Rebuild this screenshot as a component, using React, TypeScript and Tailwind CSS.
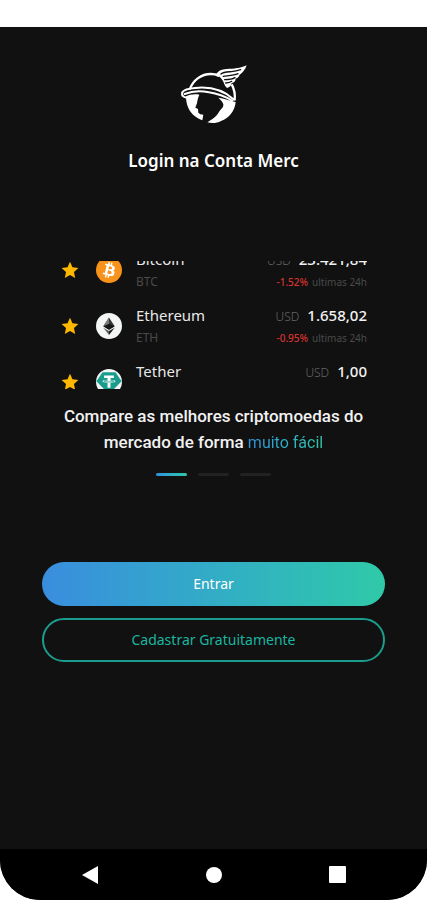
const COINS = [
  { code: 'BTC', name: 'Bitcoin', price: '23.421,84', change: '-1.52%' },
  { code: 'ETH', name: 'Ethereum', price: '1.658,02', change: '-0.95%' },
  { code: 'USDT', name: 'Tether', price: '1,00', change: '-0.01%' },
];

function MercLogo() {
  return (
    <svg viewBox="30 24 204 186" className="w-[68px] h-[62px]" fill="none" aria-label="Merc">
      {/* Helmet dome, brim and circle outline */}
      <path d="M60 101 C70 75 94 57 122 57 C132 57 139 58 145 62" stroke="#fff" strokeWidth="7" strokeLinecap="round" />
      <path d="M185 88 C193 102 196 116 194 136" stroke="#fff" strokeWidth="7" />
      <path d="M192 134 C164 108 124 96 86 98 C64 99 39 104 36 114 C35 124 44 128 50 127" stroke="#fff" strokeWidth="6" strokeLinecap="round" />
      <path d="M44 117 C66 108 94 107 117 112 C145 116 168 126 186 137" stroke="#fff" strokeWidth="6" strokeLinecap="round" />
      {/* Wing */}
      <path d="M137 60 C143 48 154 43 170 42 C192 41 211 40 230 31 C226 44 218 53 209 59 C207 66 201 70 197 71 C197 79 190 84 185 84 C184 92 179 97 171 99 C162 91 162 82 157 75 C152 67 146 63 137 60Z" fill="#fff" />
      <path d="M153 57 C160 51 172 51 184 50 C194 49 203 47 212 44 M160 64 C174 62 191 62 204 56 M164 74 C175 74 187 73 195 68 M167 84 C174 84 180 83 185 79" stroke="#111" strokeWidth="4" strokeLinecap="round" />
      {/* Face and hair silhouette */}
      <path d="M48 124 C57 119 73 116 88 119 C84 128 82 137 81 145 L76 158 L84 162 L85 173 L91 178 L100 179 L97 196 C77 189 60 174 53 154 C49 143 48 133 48 124Z" fill="#fff" />
      <path d="M145 128 C162 130 181 137 197 141 C195 166 178 190 153 198 C141 205 125 206 112 202 C126 194 141 182 145 174 C151 163 161 159 160 148 C158 139 151 134 145 128Z" fill="#fff" />
    </svg>
  );
}

function CoinIcon({ code }: { code: string }) {
  if (code === 'BTC') {
    return (
      <svg viewBox="0 0 32 32" className="size-[26px] shrink-0" aria-hidden="true">
        <circle cx="16" cy="16" r="16" fill="#f7931a" />
        <path fill="#fff" d="M23.19 14.02c.31-2.1-1.29-3.23-3.48-3.98l.71-2.85-1.73-.43-.69 2.77-1.39-.33.7-2.79-1.73-.43-.71 2.84-1.1-.26-2.4-.6-.46 1.85s1.29.3 1.26.32c.7.17.83.64.8 1l-1.94 7.8c-.09.21-.3.53-.79.41l-1.26-.31-.86 1.99 3.5.88-.72 2.88 1.73.43.71-2.85 1.38.36-.71 2.84 1.73.43.72-2.88c2.95.56 5.17.34 6.1-2.33.76-2.15-.03-3.39-1.58-4.2 1.13-.26 1.98-1 2.21-2.56zm-3.96 5.55c-.53 2.15-4.15.99-5.32.7l.95-3.81c1.17.3 4.93.88 4.37 3.11zm.54-5.58c-.49 1.96-3.5.96-4.48.72l.86-3.46c.98.25 4.13.7 3.62 2.74z" />
      </svg>
    );
  }
  if (code === 'ETH') {
    return (
      <svg viewBox="0 0 32 32" className="size-[26px] shrink-0" aria-hidden="true">
        <circle cx="16" cy="16" r="16" fill="#f4f5f5" />
        <path fill="#353638" d="M16 5.5 9 16.4 16 20.5 23 16.4Z" />
        <path fill="#161617" d="M16 13.2 23 16.4 16 20.5 9 16.4Z" />
        <path fill="#77787a" d="M16 5.5 9 16.4 16 13.2Z" />
        <path fill="#626365" d="M9 18 16 22.1V27Z" />
        <path fill="#202123" d="M23 18 16 22.1V27Z" />
      </svg>
    );
  }
  return (
    <svg viewBox="0 0 32 32" className="size-[26px] shrink-0" aria-hidden="true">
      <circle cx="16" cy="16" r="16" fill="#f4f5f5" />
      <path fill="#1a9c8d" d="M8 4h16l7.500 11L16 31 .5 15Z" />
      <path fill="#fff" d="M10 8h12v3.200h-4.200v2c3.700.2 6.200.9 6.200 1.800s-2.500 1.600-6.200 1.800V23h-3.600v-6.200C10.500 16.600 8 15.900 8 15s2.500-1.600 6.200-1.800v-2H10Z" />
      <path d="M14.200 14.100c-2.500.1-4.500.5-4.500.9s2 .9 6.300.9 6.300-.5 6.300-.9-2-.8-4.500-.9" fill="none" stroke="#1a9c8d" />
    </svg>
  );
}

function Star() {
  return (
    <svg viewBox="0 0 24 24" className="size-[18px] shrink-0" fill="#ffb800" aria-hidden="true">
      <path d="M12 1 15.300 8.300 23.200 9.200 17.300 14.600 18.900 22.500 12 18.500 5.100 22.500 6.700 14.600.8 9.200 8.700 8.300Z" />
    </svg>
  );
}

export default function App() {
  return (
    <div className="min-h-screen flex flex-col bg-white font-['Noto_Sans',sans-serif]">
      {/* Status bar */}
      <div className="h-[27px] shrink-0" />

      <div className="flex-1 flex flex-col bg-[#111111] rounded-b-[40px] overflow-hidden">
        <main className="flex-1 flex flex-col px-[42px] pt-9">
          <header className="flex flex-col items-center gap-[22px]">
            <MercLogo />
            <h1 className="text-[17px] leading-7 font-semibold text-white">Login na Conta Merc</h1>
          </header>

          {/* Coin carousel slide */}
          <section className="mt-[86px]">
            <div className="h-32 mx-[18px] overflow-hidden">
              <ul className="-mt-[19px]">
                {COINS.map((coin) => (
                  <li key={coin.code} className="h-14 flex items-center pl-px">
                    <Star />
                    <div className="ml-[17px] flex">
                      <CoinIcon code={coin.code} />
                    </div>
                    <div className="ml-[14px] flex-1">
                      <p className="text-[15px] leading-6 text-[#e8e8e8]">{coin.name}</p>
                      <p className="text-xs leading-[22px] text-[#4a4a4a]">{coin.code}</p>
                    </div>
                    <div className="text-right whitespace-nowrap">
                      <p className="text-[15px] leading-6 font-medium text-[#f2f2f2]">
                        <span className="mr-2 text-xs font-light text-[#666666]">USD</span>
                        {coin.price}
                      </p>
                      <p className="text-[10px] leading-[22px] text-[#4a4a4a]">
                        <span className="mr-1 font-medium text-[#d8322f]">{coin.change}</span>
                        ultimas 24h
                      </p>
                    </div>
                  </li>
                ))}
              </ul>
            </div>
            <p className="mt-[14px] text-center font-[Roboto,sans-serif] text-[17px] leading-[26px] font-medium text-[#f2f2f2]">
              Compare as melhores criptomoedas do <br />
              mercado de forma{' '}
              <span className="text-base leading-none font-normal bg-linear-to-r from-[#3490dc] to-[#30c9a8] bg-clip-text text-transparent">
                muito fácil
              </span>
            </p>
            <div className="mt-[18px] flex justify-center gap-[11px]">
              <span className="w-[31px] h-[3px] rounded-full bg-linear-to-r from-[#3490dc] to-[#30c9a8]" />
              <span className="w-[31px] h-[3px] rounded-full bg-[#222222]" />
              <span className="w-[31px] h-[3px] rounded-full bg-[#222222]" />
            </div>
          </section>

          <div className="mt-[86px] flex flex-col gap-3 text-sm">
            <button className="h-11 rounded-full bg-linear-to-r from-[#3a8dde] to-[#30c9a8] text-white">
              Entrar
            </button>
            <button className="h-11 rounded-full border-2 border-[#1c9c8c] text-[#1bb5a0]">
              Cadastrar Gratuitamente
            </button>
          </div>
        </main>

        {/* System navigation */}
        <nav className="h-[51px] shrink-0 bg-black flex items-center justify-between px-[81px]">
          <button aria-label="Voltar">
            <svg viewBox="0 0 18 20" className="w-[18px] h-5" fill="#fff">
              <path d="M17 1v18L1 10Z" />
            </svg>
          </button>
          <button aria-label="Início" className="size-4 rounded-full bg-white" />
          <button aria-label="Recentes" className="size-[17px] rounded-[1px] bg-white" />
        </nav>
      </div>
    </div>
  );
}
